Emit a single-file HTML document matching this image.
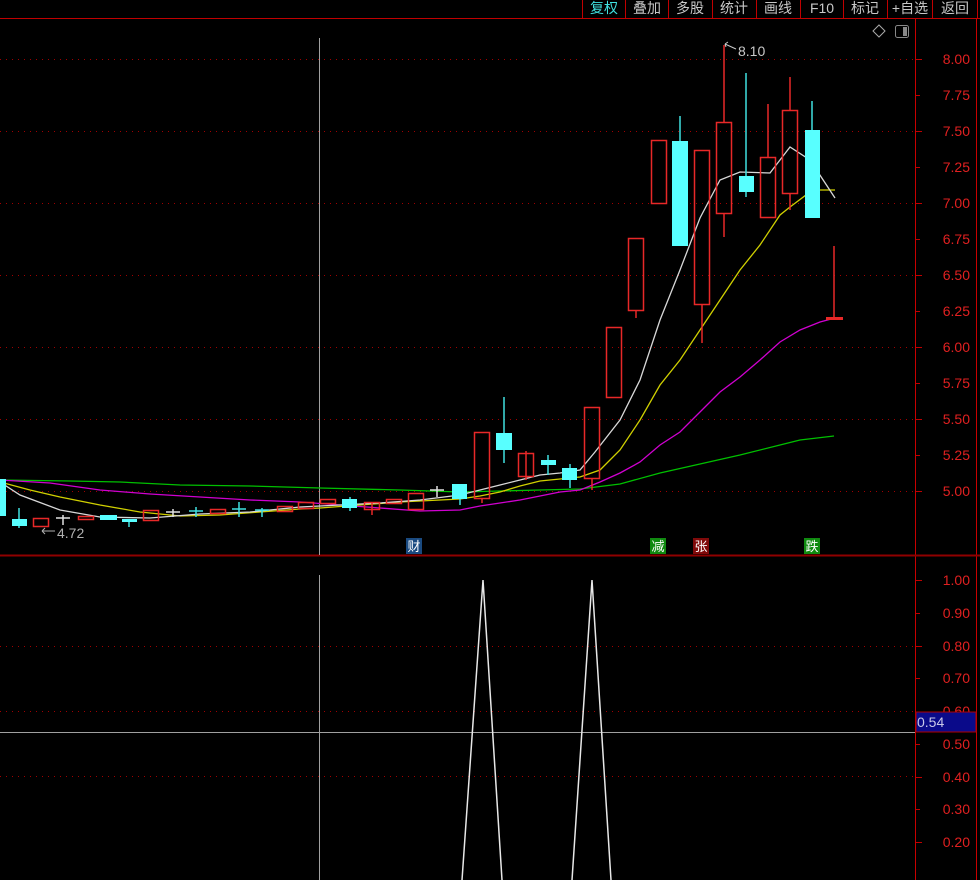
<!DOCTYPE html>
<html><head><meta charset="utf-8"><style>
html,body{margin:0;padding:0;background:#000;width:980px;height:880px;overflow:hidden}
svg{display:block}
text{font-family:"Liberation Sans","Noto Sans CJK SC",sans-serif}
</style></head><body>
<svg width="980" height="880" viewBox="0 0 980 880" xmlns="http://www.w3.org/2000/svg">
<rect width="980" height="880" fill="#000"/>
<!-- top bar -->
<g stroke="#c00000" stroke-width="1" fill="none">
<line x1="0" y1="18.5" x2="980" y2="18.5"/>
<line x1="582.5" y1="0" x2="582.5" y2="18"/><line x1="625.5" y1="0" x2="625.5" y2="18"/>
<line x1="668.5" y1="0" x2="668.5" y2="18"/><line x1="712.5" y1="0" x2="712.5" y2="18"/>
<line x1="756.5" y1="0" x2="756.5" y2="18"/><line x1="800.5" y1="0" x2="800.5" y2="18"/>
<line x1="843.5" y1="0" x2="843.5" y2="18"/><line x1="887.5" y1="0" x2="887.5" y2="18"/>
<line x1="932.5" y1="0" x2="932.5" y2="18"/><line x1="977.5" y1="0" x2="977.5" y2="18"/>
</g>
<g font-size="14" fill="#c8c8c8" text-anchor="middle">
<text x="604" y="13" fill="#40e0e0">复权</text><text x="647" y="13">叠加</text>
<text x="690" y="13">多股</text><text x="734" y="13">统计</text>
<text x="778" y="13">画线</text><text x="822" y="13">F10</text>
<text x="865" y="13">标记</text><text x="910" y="13">+自选</text><text x="955" y="13">返回</text>
</g>
<!-- icons -->
<path d="M879 25 L885 31 L879 37 L873 31 Z" fill="none" stroke="#aaa" stroke-width="1"/>
<rect x="895.5" y="25.5" width="13" height="12" rx="2" fill="none" stroke="#888"/>
<rect x="903" y="27" width="4" height="9" fill="#888"/>
<!-- axes frame -->
<g stroke="#c80000" fill="none">
<line x1="915.5" y1="19" x2="915.5" y2="880"/>
<line x1="976.5" y1="19" x2="976.5" y2="880"/>
<line x1="0" y1="555.5" x2="980" y2="555.5" stroke="#900000" stroke-width="2"/>
</g>
<!-- grid dotted -->
<g stroke="#a00000" stroke-dasharray="1,5" stroke-width="1">
<line x1="0" y1="59.5" x2="915" y2="59.5"/><line x1="0" y1="131.5" x2="915" y2="131.5"/>
<line x1="0" y1="203.5" x2="915" y2="203.5"/><line x1="0" y1="275.5" x2="915" y2="275.5"/>
<line x1="0" y1="347.5" x2="915" y2="347.5"/><line x1="0" y1="419.5" x2="915" y2="419.5"/>
<line x1="0" y1="491.5" x2="915" y2="491.5"/>
<line x1="0" y1="646.5" x2="915" y2="646.5"/><line x1="0" y1="711.5" x2="915" y2="711.5"/>
<line x1="0" y1="776.5" x2="915" y2="776.5"/>
</g>
<!-- ticks -->
<g stroke="#c00000">
<line x1="916" y1="59.5" x2="922" y2="59.5"/><line x1="916" y1="95.5" x2="920" y2="95.5"/><line x1="916" y1="131.5" x2="922" y2="131.5"/><line x1="916" y1="167.5" x2="920" y2="167.5"/><line x1="916" y1="203.5" x2="922" y2="203.5"/><line x1="916" y1="239.5" x2="920" y2="239.5"/><line x1="916" y1="275.5" x2="922" y2="275.5"/><line x1="916" y1="311.5" x2="920" y2="311.5"/><line x1="916" y1="347.5" x2="922" y2="347.5"/><line x1="916" y1="383.5" x2="920" y2="383.5"/><line x1="916" y1="419.5" x2="922" y2="419.5"/><line x1="916" y1="455.5" x2="920" y2="455.5"/><line x1="916" y1="491.5" x2="922" y2="491.5"/>
<line x1="916" y1="580.5" x2="922" y2="580.5"/><line x1="916" y1="613.5" x2="920" y2="613.5"/><line x1="916" y1="646.5" x2="922" y2="646.5"/><line x1="916" y1="678.5" x2="920" y2="678.5"/><line x1="916" y1="744.5" x2="920" y2="744.5"/><line x1="916" y1="777.5" x2="922" y2="777.5"/><line x1="916" y1="809.5" x2="920" y2="809.5"/><line x1="916" y1="842.5" x2="922" y2="842.5"/>
</g>
<g font-size="14" fill="#e02020" text-anchor="end">
<text x="970" y="64">8.00</text><text x="970" y="100">7.75</text><text x="970" y="136">7.50</text><text x="970" y="172">7.25</text><text x="970" y="208">7.00</text><text x="970" y="244">6.75</text><text x="970" y="280">6.50</text><text x="970" y="316">6.25</text><text x="970" y="352">6.00</text><text x="970" y="388">5.75</text><text x="970" y="424">5.50</text><text x="970" y="460">5.25</text><text x="970" y="496">5.00</text>
<text x="970" y="585">1.00</text><text x="970" y="618">0.90</text><text x="970" y="651">0.80</text><text x="970" y="683">0.70</text><text x="970" y="716">0.60</text><text x="970" y="749">0.50</text><text x="970" y="782">0.40</text><text x="970" y="814">0.30</text><text x="970" y="847">0.20</text>
</g>
<!-- crosshair -->
<g stroke="#a0a0a0">
<line x1="319.5" y1="38" x2="319.5" y2="555"/><line x1="319.5" y1="575" x2="319.5" y2="880"/>
<line x1="0" y1="732.5" x2="915" y2="732.5"/>
</g>
<rect x="916" y="712" width="60" height="20" fill="#0a0a8a" stroke="#b00000"/>
<text x="917" y="727" font-size="14" fill="#c8c8e8">0.54</text>
<!-- MA lines -->
<g fill="none" stroke-width="1.3">
<polyline stroke="#00c000" points="0,480 70,481 120,482 180,485 250,486 320,488 400,490 460,492 500,491 540,490 580,489 620,484 660,473 700,464 740,455 780,445 800,440 834,436"/>
<polyline stroke="#d000d0" points="0,480 50,483 100,490 150,494 200,497 250,500 300,502 340,505 380,508 420,511 460,510 480,506 500,503 520,500 540,496 560,492 580,490 600,482 620,473 640,462 660,445 680,432 700,412 720,392 740,377 760,360 780,342 800,330 820,322 835,318"/>
<polyline stroke="#d0d000" points="0,482 30,490 60,497 100,505 140,512 180,516 220,515 260,512 300,509 320,508 360,505 400,502 440,500 460,499 480,496 500,492 520,486 540,481 560,479 580,477 600,470 620,450 640,420 660,385 680,360 700,330 720,300 740,270 760,245 780,215 790,207 810,192 820,190 835,190"/>
<polyline stroke="#d8d8d8" points="0,482 20,495 60,510 100,517 150,518 200,514 250,512 300,507 340,505 380,503 420,500 460,495 480,490 500,485 520,480 540,475 560,473 580,470 595,452 620,420 640,380 660,320 680,270 700,218 720,180 740,172 770,173 790,147 810,160 835,198"/>
</g>
<!-- candles: red hollow -->
<g stroke="#e82828" fill="none" stroke-width="1.5">
<rect x="33.5" y="518.5" width="15" height="8"/>
<rect x="78.5" y="516.5" width="15" height="3"/>
<rect x="143.5" y="510.5" width="15" height="10"/>
<rect x="210.5" y="509.5" width="15" height="4"/>
<rect x="277.5" y="506.5" width="15" height="5"/>
<rect x="298.5" y="502.5" width="15" height="6"/>
<rect x="320.5" y="499.5" width="15" height="4"/>
<line x1="372" y1="502" x2="372" y2="515"/><rect x="364.5" y="502.5" width="15" height="7"/>
<rect x="386.5" y="499.5" width="15" height="4"/>
<rect x="408.5" y="493.5" width="15" height="16"/>
<line x1="482" y1="498" x2="482" y2="503"/><rect x="474.5" y="432.5" width="15" height="66"/>
<line x1="526" y1="451" x2="526" y2="480"/><rect x="518.5" y="453.5" width="15" height="23"/>
<line x1="592" y1="478" x2="592" y2="490"/><rect x="584.5" y="407.5" width="15" height="71"/>
<rect x="606.5" y="327.5" width="15" height="70"/>
<line x1="636" y1="310" x2="636" y2="318"/><rect x="628.5" y="238.5" width="15" height="72"/>
<rect x="651.5" y="140.5" width="15" height="63"/>
<line x1="702" y1="304" x2="702" y2="343"/><rect x="694.5" y="150.5" width="15" height="154"/>
<line x1="724" y1="45" x2="724" y2="122"/><line x1="724" y1="213" x2="724" y2="237"/><rect x="716.5" y="122.5" width="15" height="91"/>
<line x1="768" y1="104" x2="768" y2="157"/><rect x="760.5" y="157.5" width="15" height="60"/>
<line x1="790" y1="77" x2="790" y2="110"/><line x1="790" y1="193" x2="790" y2="210"/><rect x="782.5" y="110.5" width="15" height="83"/>
<line x1="834" y1="246" x2="834" y2="318"/>
</g>
<rect x="826" y="317" width="17" height="3" fill="#e82828"/>
<!-- cyan candles -->
<g stroke="#40e0e0" stroke-width="1.5">
<line x1="19" y1="508" x2="19" y2="528"/><line x1="129" y1="519" x2="129" y2="527"/>
<line x1="504" y1="397" x2="504" y2="463"/><line x1="548" y1="455" x2="548" y2="475"/>
<line x1="570" y1="464" x2="570" y2="488"/><line x1="680" y1="116" x2="680" y2="141"/>
<line x1="746" y1="73" x2="746" y2="197"/><line x1="812" y1="101" x2="812" y2="130"/>
<line x1="460" y1="484" x2="460" y2="505"/><line x1="350" y1="497" x2="350" y2="511"/>
<line x1="196" y1="507" x2="196" y2="517"/><line x1="239" y1="502" x2="239" y2="517"/><line x1="262" y1="508" x2="262" y2="517"/>
<line x1="189" y1="511" x2="203" y2="511"/><line x1="232" y1="509" x2="246" y2="509"/><line x1="255" y1="510" x2="269" y2="510"/>
</g>
<g fill="#58ffff">
<rect x="0" y="479" width="6" height="37"/>
<rect x="12" y="519" width="15" height="7"/>
<rect x="100" y="515" width="17" height="5"/>
<rect x="122" y="519" width="15" height="3"/>
<rect x="342" y="499" width="15" height="9"/>
<rect x="452" y="484" width="15" height="15"/>
<rect x="496" y="433" width="16" height="17"/>
<rect x="541" y="460" width="15" height="5"/>
<rect x="562" y="468" width="15" height="12"/>
<rect x="672" y="141" width="16" height="105"/>
<rect x="739" y="176" width="15" height="16"/>
<rect x="805" y="130" width="15" height="88"/>
</g>
<!-- white dojis -->
<g stroke="#e0e0e0" stroke-width="1.5">
<line x1="63" y1="515" x2="63" y2="525"/><line x1="56" y1="518" x2="70" y2="518"/>
<line x1="173" y1="509" x2="173" y2="517"/><line x1="166" y1="512" x2="180" y2="512"/>
<line x1="437" y1="486" x2="437" y2="497"/><line x1="430" y1="490" x2="444" y2="490"/>
</g>
<!-- price labels -->
<text x="738" y="56" font-size="14" fill="#c8c8c8">8.10</text>
<path d="M725 44 L736 49 M725 44 L728 42 M725 44 L726 47" stroke="#c8c8c8" fill="none"/>
<text x="57" y="538" font-size="14" fill="#b0b0b0">4.72</text>
<path d="M42 531 L55 531 M42 531 L45 528 M42 531 L45 534" stroke="#b0b0b0" fill="none"/>
<!-- markers -->
<rect x="406" y="538" width="16" height="16" fill="#1a4a80"/><text x="414" y="551" font-size="13" fill="#fff" text-anchor="middle">财</text>
<rect x="650" y="538" width="16" height="16" fill="#108a10"/><text x="658" y="551" font-size="13" fill="#fff" text-anchor="middle">减</text>
<rect x="693" y="538" width="16" height="16" fill="#800a0a"/><text x="701" y="551" font-size="13" fill="#fff" text-anchor="middle">张</text>
<rect x="804" y="538" width="16" height="16" fill="#108a10"/><text x="812" y="551" font-size="13" fill="#fff" text-anchor="middle">跌</text>
<!-- indicator -->
<g stroke="#e8e8e8" stroke-width="1.5" fill="none">
<polyline points="462,880 483,580 502,880"/>
<polyline points="572,880 592,580 611,880"/>
</g>
</svg>
</body></html>
